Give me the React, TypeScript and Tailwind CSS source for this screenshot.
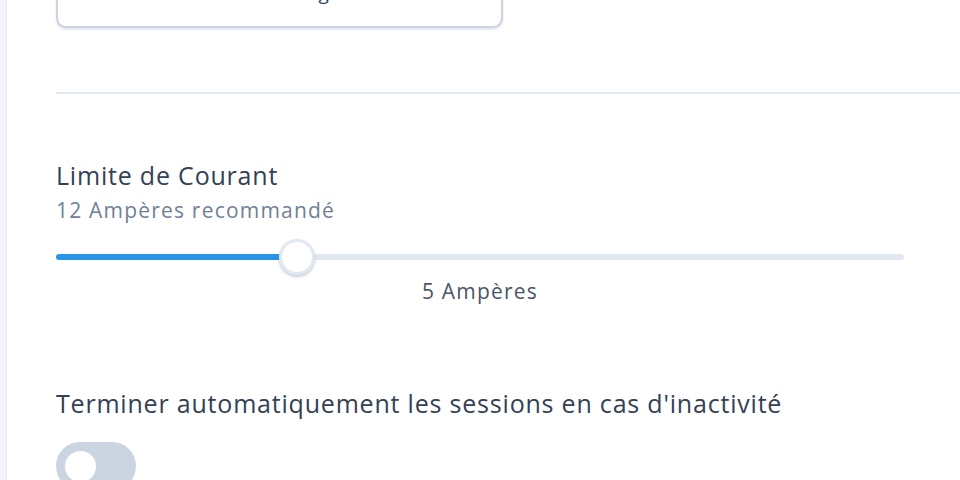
import React, { useState } from 'react';

// Charger settings panel: action button, current limit slider and auto-stop toggle
const CurrentSlider: React.FC<{ value: number; min: number; max: number }> = ({ value, min, max }) => {
  const pct = ((value - min) / (max - min)) * 100;
  return (
    <div className="relative h-[36px] w-[848px] flex items-center">
      <div className="h-[6px] w-full rounded-full bg-[#e2e8f0]">
        <div className="h-full rounded-full bg-[#2b95e5]" style={{ width: `${pct}%` }} />
      </div>
      <div
        className="absolute top-0 h-[36px] w-[36px] -translate-x-1/2 rounded-full border-[3px] border-[#e2e8f0] bg-white shadow-[0_2px_3px_rgba(100,116,139,0.35)]"
        style={{ left: `${pct}%` }}
      />
    </div>
  );
};

export default function App() {
  const [autoStop] = useState(false);

  return (
    <div className="flex h-[480px] w-[960px] overflow-hidden bg-white font-['Open_Sans','Noto_Sans',sans-serif]">
      <aside className="w-[7px] shrink-0 border-r border-[#e5eaf0] bg-[#f1f5f9]" />

      <main className="flex-1 pl-[49px]">
        {/* Action button (scrolled partly out of view) */}
        <button className="-mt-[42px] flex h-[70px] w-[447px] items-center justify-center rounded-[10px] border-2 border-[#cbd5e1] bg-white text-[19px] tracking-[0.5px] text-[#334155] shadow-[0_2px_2px_rgba(148,163,184,0.25)]">
          Exécuter un diagnostic
        </button>

        <div className="mt-[64px] h-[2px] bg-[#e2e8f0]" />

        {/* Current limit */}
        <section className="mt-[65px] w-[848px]">
          <h3 className="text-[25px] leading-[32px] tracking-[0.8px] text-[#334155]">Limite de Courant</h3>
          <p className="mt-[6px] text-[21px] leading-[26px] tracking-[1.2px] text-[#718096]">12 Ampères recommandé</p>
          <div className="mt-[16px]">
            <CurrentSlider value={5} min={0} max={17.6} />
          </div>
          <p className="mt-[3px] text-center text-[21px] leading-[26px] tracking-[1.2px] text-[#4a5568]">5 Ampères</p>
        </section>

        {/* Auto-stop on inactivity */}
        <section className="mt-[83px]">
          <h3 className="text-[25px] leading-[32px] tracking-[0.8px] text-[#334155]">
            Terminer automatiquement les sessions en cas d'inactivité
          </h3>
          <div
            className={`mt-[23px] flex h-[48px] w-[80px] items-center rounded-full px-[9px] ${
              autoStop ? 'justify-end bg-[#2b95e5]' : 'justify-start bg-[#cbd5e1]'
            }`}
          >
            <span className="h-[31px] w-[31px] rounded-full bg-white" />
          </div>
        </section>
      </main>
    </div>
  );
}
